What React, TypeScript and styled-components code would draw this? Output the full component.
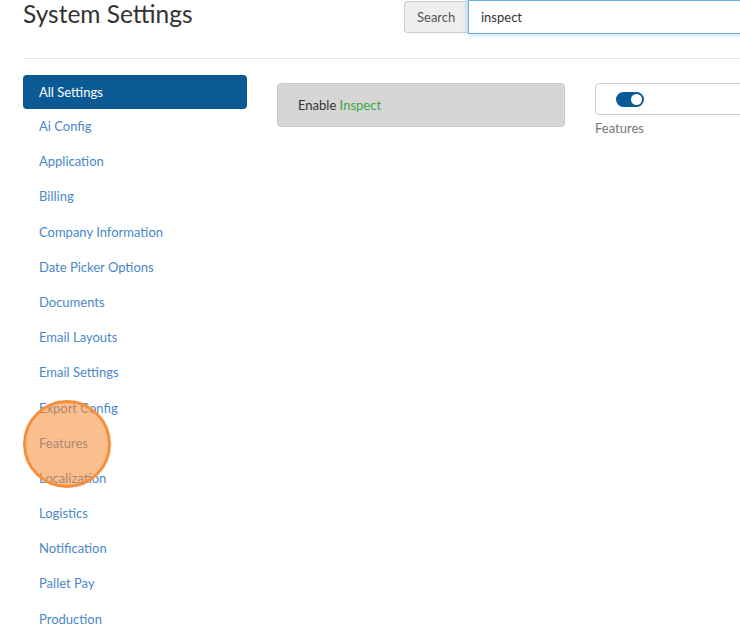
import React from "react";
import styled, { createGlobalStyle } from "styled-components";

const GlobalStyle = createGlobalStyle`
	html, body {
		margin: 0;
		padding: 0;
		background: #fff;
		overflow: hidden;
	}
	body {
		font-family: Lato, "Open Sans", "Liberation Sans", sans-serif;
		color: #333;
	}
`;

const settings = [
	"Ai Config",
	"Application",
	"Billing",
	"Company Information",
	"Date Picker Options",
	"Documents",
	"Email Layouts",
	"Email Settings",
	"Export Config",
	"Features",
	"Localization",
	"Logistics",
	"Notification",
	"Pallet Pay",
	"Production",
];

const App: React.FC = () => {
	return (
		<>
			<GlobalStyle />
			<Page>
				<Header>
					<Title>System Settings</Title>
					<SearchGroup>
						<SearchAddon>Search</SearchAddon>
						<SearchInput defaultValue="inspect" />
					</SearchGroup>
				</Header>
				<Divider />
				<Body>
					<Sidebar>
						<NavItem active>All Settings</NavItem>
						{settings.map((name) => (
							<NavItem key={name}>{name}</NavItem>
						))}
						<ClickMarker />
					</Sidebar>
					<Content>
						<SettingCard>
							Enable <Highlight>Inspect</Highlight>
						</SettingCard>
						<ToggleColumn>
							<ToggleBox>
								<Toggle on />
							</ToggleBox>
							<Category>Features</Category>
						</ToggleColumn>
					</Content>
				</Body>
			</Page>
		</>
	);
};

const Page = styled.div`
	width: 740px;
	height: 631px;
	padding-left: 23px;
	box-sizing: border-box;
	overflow: hidden;
`;

const Header = styled.div`
	display: flex;
	align-items: flex-start;
	height: 58px;
	width: 760px;
`;

const Title = styled.h1`
	margin: 0;
	font-size: 24.5px;
	font-weight: 400;
	color: #333;
	line-height: 28px;
	width: 381px;
	flex-shrink: 0;
`;

const SearchGroup = styled.div`
	display: flex;
	margin-top: 1px;
	height: 32px;
	flex: 1;
`;

const SearchAddon = styled.span`
	display: flex;
	align-items: center;
	padding: 0 12px;
	width: 64px;
	box-sizing: border-box;
	background: #eee;
	border: 1px solid #ccc;
	border-right: none;
	border-radius: 4px 0 0 4px;
	font-size: 13px;
	color: #555;
`;

const SearchInput = styled.input`
	flex: 1;
	margin-top: -1px;
	height: 34px;
	box-sizing: border-box;
	border: 1px solid #66afe9;
	box-shadow: 0 0 6px rgba(102, 175, 233, 0.6);
	outline: none;
	padding: 0 12px;
	font-family: inherit;
	font-size: 13px;
	color: #333;
`;

const Divider = styled.hr`
	margin: 0;
	border: none;
	border-top: 1px solid #e6e6e6;
`;

const Body = styled.div`
	display: flex;
	gap: 30px;
	padding-top: 16px;
`;

const Sidebar = styled.nav`
	position: relative;
	width: 224px;
	flex-shrink: 0;
	display: flex;
	flex-direction: column;
`;

const NavItem = styled.a<{ active?: boolean }>`
	display: block;
	height: ${({ active }) => (active ? "34px" : "35.2px")};
	line-height: ${({ active }) => (active ? "34px" : "35.2px")};
	padding: 0 16px;
	border-radius: 4px;
	font-size: 13px;
	background: ${({ active }) => (active ? "#0b5a95" : "transparent")};
	color: ${({ active }) => (active ? "#fff" : "#4a87c9")};
	cursor: pointer;
`;

const ClickMarker = styled.span`
	position: absolute;
	left: 0;
	top: 325px;
	width: 88px;
	height: 88px;
	box-sizing: border-box;
	border-radius: 50%;
	border: 3px solid #f68f3c;
	background: rgba(248, 137, 48, 0.55);
	pointer-events: none;
`;

const Content = styled.div`
	display: flex;
	gap: 30px;
	padding-top: 8px;
	align-items: flex-start;
	flex-shrink: 0;
`;

const SettingCard = styled.div`
	width: 288px;
	height: 44px;
	box-sizing: border-box;
	padding: 0 20px;
	display: flex;
	align-items: center;
	background: #d6d6d6;
	border: 1px solid #c9c9c9;
	border-radius: 4px;
	font-size: 13px;
	color: #333;
	white-space: pre;
	flex-shrink: 0;
`;

const Highlight = styled.span`
	color: #3aa83a;
`;

const ToggleColumn = styled.div`
	display: flex;
	flex-direction: column;
	flex-shrink: 0;
`;

const ToggleBox = styled.div`
	width: 160px;
	height: 32px;
	box-sizing: border-box;
	border: 1px solid #ccc;
	border-radius: 4px;
	display: flex;
	align-items: center;
	padding-left: 20px;
`;

const Toggle = styled.span<{ on?: boolean }>`
	position: relative;
	width: 28px;
	height: 15px;
	border-radius: 8px;
	background: ${({ on }) => (on ? "#0b5a95" : "#ccc")};

	&::after {
		content: "";
		position: absolute;
		top: 2px;
		left: ${({ on }) => (on ? "15px" : "2px")};
		width: 11px;
		height: 11px;
		border-radius: 50%;
		background: #fff;
	}
`;

const Category = styled.span`
	margin-top: 5px;
	font-size: 13px;
	color: #777;
`;

export default App;
